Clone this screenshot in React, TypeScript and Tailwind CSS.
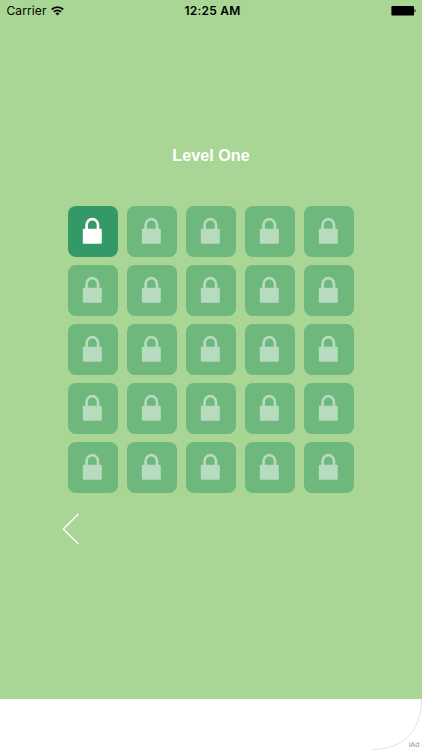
import React from "react";
import clsx from "clsx";

const LEVELS = Array.from({ length: 25 }, (_, i) => i + 1);

function LockIcon({ className }: { className?: string }) {
  return (
    <svg viewBox="0 0 50.5 50.5" className={clsx("h-full w-full", className)}>
      <path
        d="M18.6 23V18.9a5.7 5.7 0 0 1 11.4 0V23"
        fill="none"
        stroke="currentColor"
        strokeWidth="2.7"
      />
      <rect x="14.8" y="22.8" width="19" height="15" rx="1" fill="currentColor" />
    </svg>
  );
}

function StatusBar() {
  return (
    <header className="grid h-5 grid-cols-3 items-center pt-[2px] text-black">
      <div className="flex items-center gap-1 pl-[6.5px]">
        <span className="text-[12px] leading-4 tracking-[0.1px]">Carrier</span>
        <svg width="13" height="10" viewBox="0 0 13 10" fill="none" stroke="currentColor" className="mb-px">
          <path d="M.8 3.5a8.2 8.2 0 0 1 11.4 0" strokeWidth="1.8" />
          <path d="M2.9 5.8a5.1 5.1 0 0 1 7.2 0" strokeWidth="1.7" />
          <path d="M6.5 9.6 4.5 7.5a2.9 2.9 0 0 1 4 0Z" fill="currentColor" stroke="none" />
        </svg>
      </div>
      <div className="pl-[3px] text-center text-[12px] leading-4 font-semibold tracking-[0.25px]">
        12:25 AM
      </div>
      <div className="flex justify-end pr-[6px]">
        <svg width="25" height="10" viewBox="0 0 25 10" fill="currentColor">
          <rect x="0.4" y="0" width="22.6" height="9.6" rx="1.2" />
          <path d="M23.5 3.2c1.5.3 1.5 2.9 0 3.2Z" />
        </svg>
      </div>
    </header>
  );
}

export default function App() {
  return (
    <div className="flex h-[750px] w-[422px] flex-col bg-[#a9d595] font-['Inter','Liberation_Sans',sans-serif]">
      <StatusBar />

      <main className="flex flex-1 flex-col">
        <h1 className="mt-[123px] text-center font-['Liberation_Sans',sans-serif] text-[16.2px] leading-6 font-bold text-white">
          Level One
        </h1>

        {/* Level grid */}
        <div className="mt-[39.4px] ml-[67.8px] grid w-fit grid-cols-5 gap-[8.5px]">
          {LEVELS.map((level) => (
            <button
              key={level}
              className={clsx(
                "size-[50.5px] rounded-[8px]",
                level === 1 ? "bg-[#339966]" : "bg-[#339966]/50"
              )}
            >
              <LockIcon className={level === 1 ? "text-white" : "text-white opacity-50"} />
            </button>
          ))}
        </div>

        <button className="mt-5 ml-[62px] h-8 w-[18px] text-white">
          <svg width="18" height="32" viewBox="0 0 18 32" fill="none" stroke="currentColor" strokeWidth="1.4">
            <path d="M16.4 1 1.3 16 16.4 31" />
          </svg>
        </button>
      </main>

      {/* Ad banner */}
      <footer className="relative h-[51px] bg-white">
        <svg width="422" height="51" viewBox="0 0 422 51" fill="none" stroke="#e4e4e4">
          <path d="M421.5 0C421 31 405 50 372 50.5" />
        </svg>
        <span className="absolute right-[2.5px] bottom-px font-['Liberation_Sans',sans-serif] text-[7.5px] leading-[9px] text-[#999]">
          iAd
        </span>
      </footer>
    </div>
  );
}
